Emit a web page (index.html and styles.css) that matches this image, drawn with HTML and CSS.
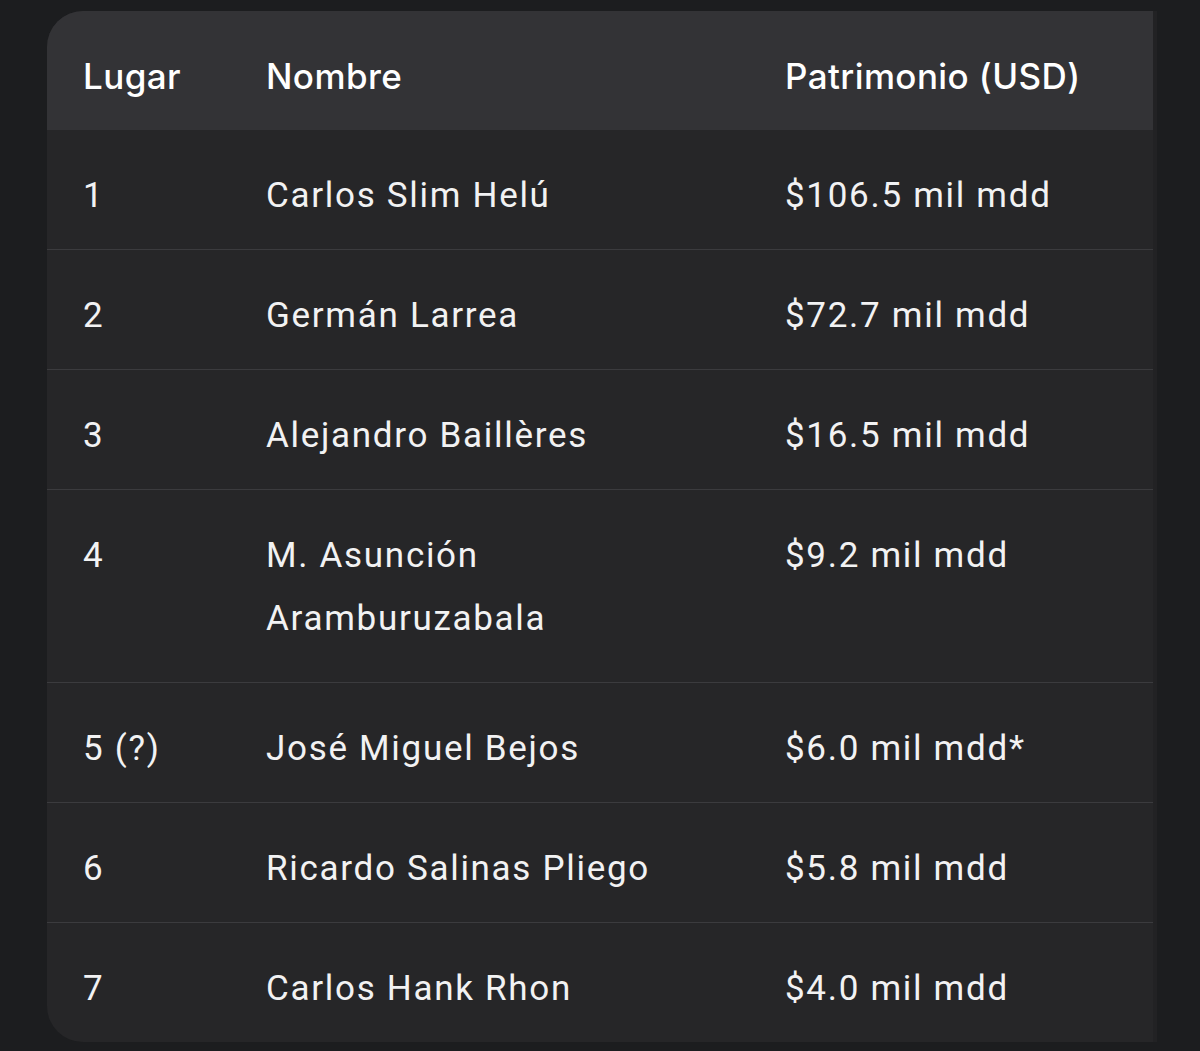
FILE: index.html
```html
<!DOCTYPE html>
<html lang="es">
<head>
<meta charset="utf-8">
<link rel="stylesheet" href="styles.css">
</head>
<body>
<div class="card">
  <table class="rank">
    <thead>
      <tr><th class="c1">Lugar</th><th class="c2">Nombre</th><th class="c3">Patrimonio (USD)</th></tr>
    </thead>
    <tbody>
      <tr><td>1</td><td>Carlos Slim Helú</td><td>$106.5 mil mdd</td></tr>
      <tr><td>2</td><td>Germán Larrea</td><td>$72.7 mil mdd</td></tr>
      <tr><td>3</td><td>Alejandro Baillères</td><td>$16.5 mil mdd</td></tr>
      <tr class="tall"><td>4</td><td>M. Asunción<br>Aramburuzabala</td><td>$9.2 mil mdd</td></tr>
      <tr><td>5 (?)</td><td>José Miguel Bejos</td><td>$6.0 mil mdd*</td></tr>
      <tr><td>6</td><td>Ricardo Salinas Pliego</td><td>$5.8 mil mdd</td></tr>
      <tr><td>7</td><td>Carlos Hank Rhon</td><td>$4.0 mil mdd</td></tr>
    </tbody>
  </table>
</div>
</body>
</html>
```
FILE: styles.css
```css
html, body {
  margin: 0;
  padding: 0;
  background: #1c1d1f;
}
body {
  padding: 11px 0 0 47px;
  font-family: Roboto, "Liberation Sans", Arial, sans-serif;
  color: #f2f2f3;
}
.card {
  width: 1106px;
  background: #262628;
  border-radius: 36px 0 0 36px;
  overflow: hidden;
  border-right: 4px solid #222224;
}
.rank {
  width: 100%;
  border-collapse: collapse;
  table-layout: fixed;
}
.rank th {
  background: #333336;
  font-family: Inter, "Noto Sans", sans-serif;
  font-weight: 500;
  font-size: 35px;
  letter-spacing: 0.4px;
  text-align: left;
  height: 119px;
  padding: 11px 0 0 0;
  color: #ffffff;
  vertical-align: middle;
  box-sizing: border-box;
}
.rank .c1 { width: 219px; padding-left: 36px; }
.rank .c2 { width: 519px; }
.rank td {
  font-size: 35px;
  letter-spacing: 1.7px;
  line-height: 63px;
  padding: 34px 0 22px 0;
  vertical-align: top;
  border-top: 1px solid #3b3b3e;
}
.rank td:first-child { padding-left: 36px; }
.rank tbody tr:first-child td { border-top: none; }
.rank .tall td { padding-bottom: 32px; }
```
